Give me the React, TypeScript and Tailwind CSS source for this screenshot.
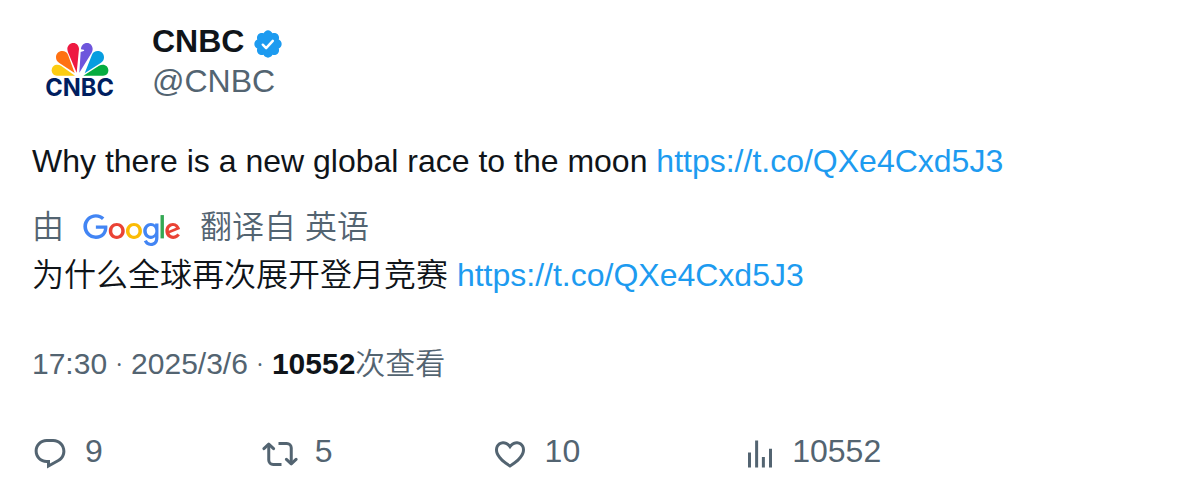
import type { ReactNode } from 'react';

const TWEET_URL = 'https://t.co/QXe4Cxd5J3';

function CnbcLogo() {
  return (
    <svg viewBox="-12 -33 288 288" className="size-24 shrink-0" role="img" aria-label="CNBC">
      <path fill="#FCCC12" d="M117 131H63c-10 0-16-7-16-16 0-11 8-17 17-17 4 0 7 1 11 3z" />
      <path fill="#FF7112" d="M116 123L70 93c-7-4-10-10-10-17 0-11 8-19 19-19 8 0 14 4 17 11z" />
      <path fill="#EE1941" d="M122 122L96 61c-1-4-2-7-2-10 0-10 8-18 18-18s17 8 17 18z" />
      <path fill="#6E55DC" d="M130 122l4-62 9-3c2-1 2-3 0-4l-8-1c0-11 8-19 18-19s17 8 17 18c0 4-1 7-3 11z" />
      <path fill="#069DE0" d="M146 124l22-56c3-7 9-11 17-11 11 0 19 8 19 19 0 7-3 13-10 17z" />
      <path fill="#05AC3F" d="M142 131l47-30c4-2 7-3 11-3 10 0 17 7 17 17 0 10-6 16-16 16z" />
      <text
        x="131"
        y="192"
        textAnchor="middle"
        fontFamily="Inter, sans-serif"
        fontWeight="700"
        fontSize="71"
        fill="#001E5F"
      >
        CNBC
      </text>
    </svg>
  );
}

function VerifiedBadge() {
  return (
    <svg viewBox="0 0 22 22" className="mt-1.5 size-8 shrink-0 fill-[#1d9bf0]" role="img" aria-label="已认证">
      <path d="M20.396 11c-.018-.646-.215-1.275-.57-1.816-.354-.54-.852-.972-1.438-1.246.223-.607.27-1.264.14-1.897-.131-.634-.437-1.218-.882-1.687-.47-.445-1.053-.75-1.687-.882-.633-.13-1.29-.083-1.897.14-.273-.587-.704-1.086-1.245-1.44S11.647 1.62 11 1.604c-.646.017-1.273.213-1.813.568s-.969.854-1.24 1.44c-.608-.223-1.267-.272-1.902-.14-.635.13-1.22.436-1.69.882-.445.47-.749 1.055-.878 1.688-.13.633-.08 1.29.144 1.896-.587.274-1.087.705-1.443 1.245-.356.54-.555 1.17-.574 1.817.02.647.218 1.276.574 1.817.356.54.856.972 1.443 1.245-.224.606-.274 1.263-.144 1.896.13.634.433 1.218.877 1.688.47.443 1.054.747 1.687.878.633.132 1.29.084 1.897-.136.274.586.705 1.084 1.246 1.439.54.354 1.17.551 1.816.569.647-.016 1.276-.213 1.817-.567s.972-.854 1.245-1.44c.604.239 1.266.296 1.903.164.636-.132 1.22-.447 1.68-.907.46-.46.776-1.044.908-1.681s.075-1.299-.165-1.903c.586-.274 1.084-.705 1.439-1.246.354-.54.551-1.17.569-1.816z" />
      <path
        fill="none"
        stroke="#fff"
        strokeWidth="1.7"
        strokeLinecap="round"
        strokeLinejoin="round"
        d="M7.4 11.5l2.3 2.3 4.6-5"
      />
    </svg>
  );
}

function GoogleLogo() {
  return (
    <svg viewBox="0 0 272 92" className="h-[33px] w-[98px] shrink-0" role="img" aria-label="Google">
      <path fill="#EA4335" d="M115.75 47.18c0 12.77-9.99 22.18-22.25 22.18s-22.25-9.41-22.25-22.18C71.25 34.32 81.24 25 93.5 25s22.25 9.32 22.25 22.18zm-9.74 0c0-7.98-5.79-13.44-12.51-13.44S80.99 39.2 80.99 47.18c0 7.9 5.79 13.44 12.51 13.44s12.51-5.55 12.51-13.44z" />
      <path fill="#FBBC05" d="M163.75 47.18c0 12.77-9.99 22.18-22.25 22.18s-22.25-9.41-22.25-22.18c0-12.85 9.99-22.18 22.25-22.18s22.25 9.32 22.25 22.18zm-9.74 0c0-7.98-5.79-13.44-12.51-13.44s-12.51 5.46-12.51 13.44c0 7.9 5.79 13.44 12.51 13.44s12.51-5.55 12.51-13.44z" />
      <path fill="#4285F4" d="M209.75 26.34v39.82c0 16.38-9.66 23.07-21.08 23.07-10.75 0-17.22-7.19-19.66-13.07l8.48-3.53c1.51 3.61 5.21 7.87 11.17 7.87 7.31 0 11.84-4.51 11.84-13v-3.19h-.34c-2.18 2.69-6.38 5.04-11.68 5.04-11.09 0-21.25-9.66-21.25-22.09 0-12.52 10.16-22.26 21.25-22.26 5.29 0 9.49 2.35 11.68 4.96h.34v-3.61h9.25zm-8.56 20.92c0-7.81-5.21-13.52-11.84-13.52-6.72 0-12.35 5.71-12.35 13.52 0 7.73 5.63 13.36 12.35 13.36 6.63 0 11.84-5.63 11.84-13.36z" />
      <path fill="#34A853" d="M225 3v65h-9.5V3h9.5z" />
      <path fill="#EA4335" d="M262.02 54.48l7.56 5.04c-2.44 3.61-8.32 9.83-18.48 9.83-12.6 0-22.01-9.74-22.01-22.18 0-13.19 9.49-22.18 20.92-22.18 11.51 0 17.14 9.16 18.98 14.11l1.01 2.52-29.65 12.28c2.27 4.45 5.8 6.72 10.75 6.72 4.96 0 8.4-2.44 10.92-6.14zm-23.27-7.98l19.82-8.23c-1.09-2.77-4.37-4.7-8.23-4.7-4.95 0-11.84 4.37-11.59 12.93z" />
      <path fill="#4285F4" d="M35.29 41.41V32H67c.31 1.64.47 3.58.47 5.68 0 7.06-1.93 15.79-8.15 22.01-6.05 6.3-13.78 9.66-24.02 9.66C16.32 69.35.36 53.89.36 34.91.36 15.93 16.32.47 35.3.47c10.5 0 17.98 4.12 23.6 9.49l-6.64 6.64c-4.03-3.78-9.49-6.72-16.97-6.72-13.86 0-24.7 11.17-24.7 25.03 0 13.86 10.84 25.03 24.7 25.03 8.99 0 14.11-3.61 17.39-6.89 2.66-2.66 4.41-6.46 5.1-11.65l-22.49.01z" />
    </svg>
  );
}

const ACTIONS = [
  {
    label: '回复',
    count: 9,
    viewBox: '0 0 24 24',
    icon: (
      <path d="M1.751 10c0-4.42 3.584-8 8.005-8h4.366c4.49 0 8.129 3.64 8.129 8.13 0 2.96-1.607 5.68-4.196 7.11l-8.054 4.46v-3.69h-.067c-4.49.1-8.183-3.51-8.183-8.01zm8.005-6c-3.317 0-6.005 2.69-6.005 6 0 3.37 2.77 6.08 6.138 6.01l.351-.01h1.761v2.3l5.087-2.81c1.951-1.08 3.163-3.13 3.163-5.36 0-3.39-2.744-6.13-6.129-6.13H9.756z" />
    ),
  },
  {
    label: '转推',
    count: 5,
    viewBox: '0 0 24 24',
    icon: (
      <g fill="none" stroke="currentColor" strokeWidth="2" strokeLinejoin="round">
        <path d="M4.5 5.4V16c0 1.7 1.3 3 3 3H13M11 5h5.5c1.7 0 3 1.3 3 3v10.6" />
        <path strokeLinecap="round" d="M1.3 8.4l3.2-3 3.2 3M16.3 15.6l3.2 3 3.2-3" />
      </g>
    ),
  },
  {
    label: '喜欢',
    count: 10,
    viewBox: '0 0 24 24',
    icon: (
      <path d="M16.697 5.5c-1.222-.06-2.679.51-3.89 2.16l-.805 1.09-.806-1.09C9.984 6.01 8.526 5.44 7.304 5.5c-1.243.07-2.349.78-2.91 1.91-.552 1.12-.633 2.78.479 4.82 1.074 1.97 3.257 4.27 7.129 6.61 3.87-2.34 6.052-4.64 7.126-6.61 1.111-2.04 1.03-3.7.477-4.82-.561-1.13-1.666-1.84-2.908-1.91zm4.187 7.69c-1.351 2.48-4.001 5.12-8.379 7.67l-.503.3-.504-.3c-4.379-2.55-7.029-5.19-8.382-7.67-1.36-2.5-1.41-4.86-.514-6.67.887-1.79 2.647-2.91 4.601-3.01 1.651-.09 3.368.56 4.798 2.01 1.429-1.45 3.146-2.1 4.796-2.01 1.954.1 3.714 1.22 4.601 3.01.896 1.81.846 4.17-.514 6.67z" />
    ),
  },
  {
    label: '查看',
    count: 10552,
    viewBox: '-2 0 24 24',
    icon: <path d="M8.75 21V3h2v18h-2zM18 21V8.5h2V21h-2zM4 21l.004-10h2L6 21H4zm9.248 0v-7h2v7h-2z" />,
  },
];

function TweetLink({ children }: { children: ReactNode }) {
  return (
    <a href={TWEET_URL} className="text-[#1d9bf0]">
      {children}
    </a>
  );
}

function Dot() {
  return <span className="font-['Noto_Sans']">·</span>;
}

export default function App() {
  return (
    <article
      lang="zh-CN"
      className="bg-white px-8 pt-[21px] pb-6 font-['Liberation_Sans','Noto_Sans_CJK_SC',sans-serif] text-[32px] leading-12 font-[350] text-[#0f1419]"
    >
      <header className="flex gap-6">
        <CnbcLogo />
        <div className="leading-10">
          <div className="flex h-10 items-center gap-2">
            <span className="font-bold">CNBC</span>
            <VerifiedBadge />
          </div>
          <div className="text-[#536471]">@CNBC</div>
        </div>
      </header>

      <p className="mt-5">
        Why there is a new global race to the moon <TweetLink>{TWEET_URL}</TweetLink>
      </p>

      <div className="mt-[18px] flex h-12 items-center text-[#536471]">
        <span>由</span>
        <span className="mx-[19px] mt-1.5 flex">
          <GoogleLogo />
        </span>
        <span>翻译自 英语</span>
      </div>
      <p>
        为什么全球再次展开登月竞赛 <TweetLink>{TWEET_URL}</TweetLink>
      </p>

      <p className="mt-10 text-[30px] text-[#536471]">
        <time dateTime="2025-03-06T17:30">
          17:30 <Dot /> 2025/3/6
        </time>{' '}
        <Dot /> <strong className="font-bold text-[#0f1419]">10552</strong>次查看
      </p>

      <footer className="mt-[39px] flex gap-[159px] text-[#536471]">
        {ACTIONS.map(({ label, count, viewBox, icon }) => (
          <button key={label} type="button" aria-label={`${label} ${count}`} className="flex h-12 items-center gap-[17px]">
            <svg viewBox={viewBox} className="mt-1.5 size-9 shrink-0 fill-current" aria-hidden="true">
              {icon}
            </svg>
            <span>{count}</span>
          </button>
        ))}
      </footer>
    </article>
  );
}
